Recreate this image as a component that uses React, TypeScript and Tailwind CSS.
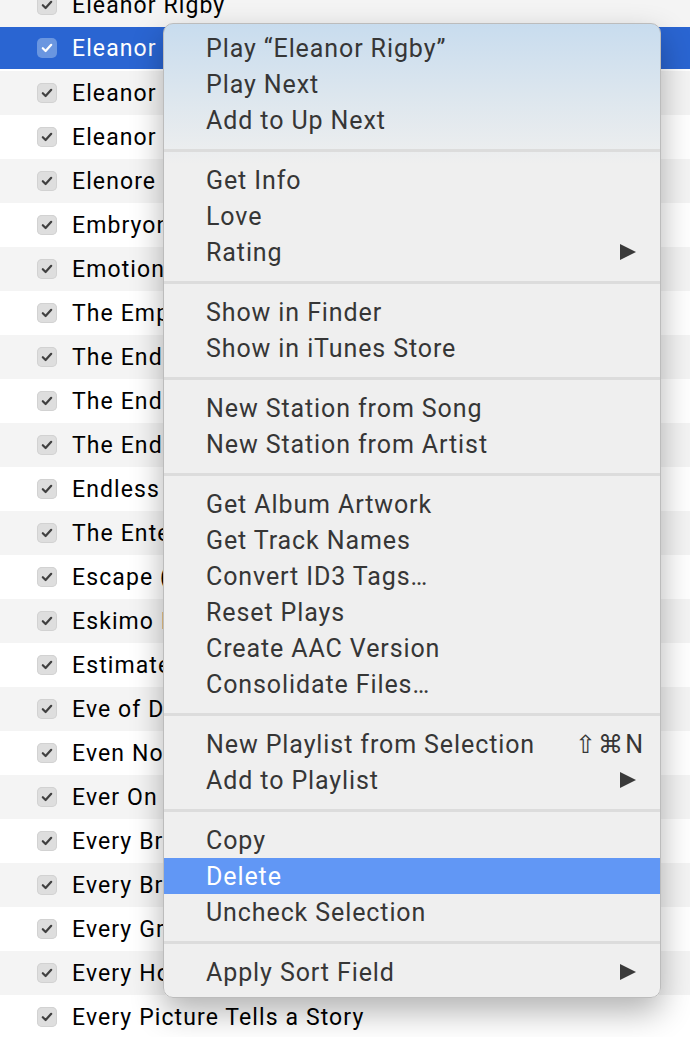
import React from "react";

const songs = [
  "Eleanor Rigby",
  "Eleanor Rigby",
  "Eleanor Rigby (Remastered)",
  "Eleanor Rigby (Live)",
  "Elenore",
  "Embryonic Journey",
  "Emotional Rescue",
  "The Empty Page",
  "The End",
  "The End of the Innocence",
  "The End of the World",
  "Endless Love",
  "The Entertainer",
  "Escape (The Pina Colada Song)",
  "Eskimo Blue Day",
  "Estimated Prophet",
  "Eve of Destruction",
  "Even Now",
  "Ever On and On",
  "Every Breath You Take",
  "Every Breath You Take (Live)",
  "Every Grain of Sand",
  "Every Hour",
  "Every Picture Tells a Story",
];

type Item = { label: string; sub?: boolean; shortcut?: string; active?: boolean };

const groups: Item[][] = [
  [{ label: "Play \u201CEleanor Rigby\u201D" }, { label: "Play Next" }, { label: "Add to Up Next" }],
  [{ label: "Get Info" }, { label: "Love" }, { label: "Rating", sub: true }],
  [{ label: "Show in Finder" }, { label: "Show in iTunes Store" }],
  [{ label: "New Station from Song" }, { label: "New Station from Artist" }],
  [
    { label: "Get Album Artwork" },
    { label: "Get Track Names" },
    { label: "Convert ID3 Tags\u2026" },
    { label: "Reset Plays" },
    { label: "Create AAC Version" },
    { label: "Consolidate Files\u2026" },
  ],
  [{ label: "New Playlist from Selection", shortcut: "\u21E7\u2318N" }, { label: "Add to Playlist", sub: true }],
  [{ label: "Copy" }, { label: "Delete", active: true }, { label: "Uncheck Selection" }],
  [{ label: "Apply Sort Field", sub: true }],
];

function Check({ selected }: { selected: boolean }) {
  return (
    <div
      className={`flex h-[20px] w-[20px] items-center justify-center rounded-[5px] ${
        selected ? "bg-[#6a96e0]" : "bg-[#dedede] shadow-[inset_0_0_0_1px_#d2d2d2]"
      }`}
    >
      <svg width="12" height="10" viewBox="0 0 12 10">
        <path
          d="M1.8 5.2 L4.6 8 L10.2 1.8"
          fill="none"
          stroke={selected ? "#ffffff" : "#404040"}
          strokeWidth="2.2"
          strokeLinecap="round"
          strokeLinejoin="round"
        />
      </svg>
    </div>
  );
}

function Arrow() {
  return (
    <svg width="18" height="18" viewBox="0 0 18 18">
      <path d="M1 1 L17 9 L1 17 Z" fill="#3a3a3a" />
    </svg>
  );
}

export default function App() {
  return (
    <div className="relative h-[1037px] w-[690px] overflow-hidden bg-white font-['Roboto',sans-serif]">
      {/* track list */}
      <div className="-mt-[17px] flex flex-col">
        {songs.map((s, i) => {
          const selected = i === 1;
          const bg = selected ? "bg-[#2a65d2]" : i % 2 === 0 ? "bg-[#f4f4f4]" : "bg-white";
          return (
            <div key={i} className={`flex h-[44px] items-center ${bg} ${selected ? "border-b-2 border-white" : ""}`}>
              <div className="ml-[37px]">
                <Check selected={selected} />
              </div>
              <span
                className={`ml-[15px] whitespace-nowrap pt-[2px] text-[23px] tracking-[1.1px] ${
                  selected ? "text-white" : "text-black"
                }`}
              >
                {s}
              </span>
            </div>
          );
        })}
      </div>

      {/* context menu */}
      <div className="absolute left-[163px] top-[23px] w-[498px] rounded-[10px] border border-[#bcbcbc] bg-[linear-gradient(to_bottom,#c8dcee_0px,#dce6ee_70px,#efefef_140px,#efefef_100%)] pt-[6px] pb-[7px] text-[25px] tracking-[0.9px] text-[#363636] shadow-[0_14px_32px_rgba(0,0,0,0.3)]">
        {groups.map((g, gi) => (
          <div key={gi}>
            {gi > 0 && <div className="mt-[11px] mb-[10px] h-[3px] bg-[#dcdcdc]" />}
            {g.map((it) => (
              <div
                key={it.label}
                className={`flex h-[36px] items-center pl-[42px] ${it.active ? "bg-[#6197f5] text-white" : ""} ${
                  it.shortcut ? "pr-[15px]" : "pr-[23px]"
                }`}
              >
                <span className="flex-1 whitespace-nowrap pt-[2px]">{it.label}</span>
                {it.shortcut && <span className="pt-[2px] tracking-[2px]">{it.shortcut}</span>}
                {it.sub && <Arrow />}
              </div>
            ))}
          </div>
        ))}
      </div>
    </div>
  );
}
